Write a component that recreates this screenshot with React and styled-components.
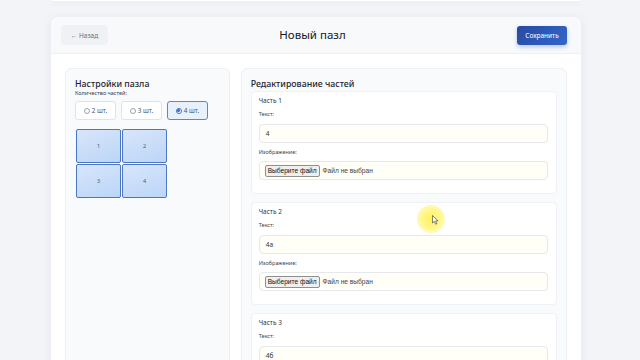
import React from "react";
import styled, { createGlobalStyle } from "styled-components";

const Global = createGlobalStyle`
  html, body { margin: 0; padding: 0; }
  body {
    background: #f2f4f8;
    font-family: "Noto Sans", "Open Sans", sans-serif;
    color: #1f2937;
    overflow: hidden;
  }
`;

const Page = styled.div`
  width: 640px;
  height: 360px;
  position: relative;
  overflow: hidden;
`;

const TopStrip = styled.div`
  margin: 0 60px 0 52px;
  height: 1px;
  background: #ffffff;
  box-shadow: 0 2px 5px rgba(30, 40, 70, 0.12);
`;

const MainCard = styled.div`
  margin: 15px 58px 0 50px;
  background: #ffffff;
  border: 1px solid #eceff4;
  border-radius: 8px;
  box-shadow: 0 2px 8px rgba(30, 40, 70, 0.06);
  height: 400px;
`;

const Header = styled.div`
  height: 36px;
  display: flex;
  align-items: center;
  justify-content: space-between;
  padding: 0 14px 0 10px;
  background: #f8f9fb;
  border-bottom: 1px solid #edf0f4;
  border-radius: 8px 8px 0 0;
`;

const BackButton = styled.button`
  width: 47px;
  height: 20px;
  border: none;
  border-radius: 4px;
  background: #eff1f5;
  color: #6b7280;
  font-family: "Noto Sans", sans-serif;
  font-size: 6.5px;
  padding: 0;
`;

const Title = styled.h1`
  margin: 0;
  font-size: 11.5px;
  line-height: 14px;
  font-weight: 400;
  color: #15181d;
`;

const SaveButton = styled.button`
  width: 50px;
  height: 19px;
  border: none;
  border-radius: 3px;
  background: linear-gradient(135deg, #274aa0 0%, #3466cc 100%);
  color: #ffffff;
  font-family: "Noto Sans", sans-serif;
  font-size: 6.5px;
  padding: 0;
  box-shadow: 0 2px 4px rgba(40, 80, 180, 0.3);
`;

const Body = styled.div`
  display: flex;
  gap: 11px;
  padding: 14px 14px 0 14px;
  align-items: flex-start;
`;

const Panel = styled.div`
  width: ${(p) => p.$w}px;
  height: 320px;
  box-sizing: border-box;
  background: #f8fafc;
  border: 1px solid #edf0f4;
  border-radius: 6px;
  padding: 9px 9px 0 9px;
`;

const PanelTitle = styled.h2`
  margin: 0;
  font-size: 8.8px;
  line-height: 12px;
  font-weight: 500;
  color: #1f2430;
`;

const SmallLabel = styled.div`
  font-size: 5.5px;
  line-height: 7px;
  color: #374151;
`;

const RadioRow = styled.div`
  display: flex;
  gap: 5px;
  margin-top: 4px;
`;

const RadioBox = styled.label`
  width: 41px;
  height: 19px;
  box-sizing: border-box;
  display: flex;
  align-items: center;
  justify-content: center;
  gap: 2px;
  border: 1px solid ${(p) => (p.$active ? "#5f86c8" : "#dfe3e9")};
  background: ${(p) => (p.$active ? "#e8f0fc" : "#ffffff")};
  border-radius: 3px;
  font-size: 6.5px;
  color: #4b5563;
`;

const RadioDot = styled.span`
  width: 4px;
  height: 4px;
  border-radius: 50%;
  border: 0.8px solid ${(p) => (p.$active ? "#3b6fd0" : "#9aa1ab")};
  background: #fff;
  display: inline-flex;
  align-items: center;
  justify-content: center;
  &::after {
    content: "";
    width: 2.4px;
    height: 2.4px;
    border-radius: 50%;
    background: ${(p) => (p.$active ? "#3b6fd0" : "transparent")};
  }
`;

const PieceGrid = styled.div`
  display: grid;
  grid-template-columns: 45px 45px;
  grid-auto-rows: 34px;
  gap: 1px;
  margin: 9px 0 0 1px;
  width: 91px;
`;

const Piece = styled.div`
  box-sizing: border-box;
  border: 1px solid #4a76c4;
  border-radius: 2px;
  background: linear-gradient(160deg, #d7e6fb 0%, #bcd5f7 100%);
  display: flex;
  align-items: center;
  justify-content: center;
  font-size: 5.5px;
  color: #4b5563;
`;

const EditTitle = styled(PanelTitle)`
  margin-bottom: 1px;
`;

const PartList = styled.div`
  display: flex;
  flex-direction: column;
  gap: 8px;
`;

const PartCard = styled.div`
  background: #ffffff;
  border: 1px solid #eef1f5;
  border-radius: 4px;
  padding: 5px 8px 14px 7px;
  height: 103px;
  box-sizing: border-box;
`;

const PartTitle = styled.div`
  font-size: 6.5px;
  line-height: 8px;
  color: #333;
`;

const FieldLabel = styled.div`
  font-size: 5.5px;
  line-height: 7px;
  color: #444;
  margin-top: ${(p) => p.$mt}px;
`;

const TextInput = styled.div`
  margin-top: 6px;
  height: 19px;
  box-sizing: border-box;
  border: 1px solid #e6e8ec;
  border-radius: 4px;
  background: #fffef7;
  display: flex;
  align-items: center;
  padding-left: 6px;
  font-size: 6.5px;
  color: #333;
`;

const FileInput = styled(TextInput)`
  margin-top: 5px;
  padding-left: 5px;
  gap: 3px;
  font-family: "Liberation Sans", Arial, sans-serif;
  font-size: 6.6px;
  color: #444;
`;

const FileButton = styled.span`
  height: 12px;
  box-sizing: border-box;
  display: inline-flex;
  align-items: center;
  padding: 0 2px;
  background: #efefef;
  border: 1px solid #8f8f8f;
  border-radius: 2px;
  color: #111;
`;

const Highlight = styled.div`
  position: absolute;
  left: 417px;
  top: 205px;
  width: 28px;
  height: 28px;
  border-radius: 50%;
  background: radial-gradient(circle, rgba(255, 240, 40, 0.8) 0%, rgba(255, 242, 70, 0.55) 55%, rgba(255, 245, 100, 0) 100%);
  pointer-events: none;
`;

const Cursor = styled.svg`
  position: absolute;
  left: 432px;
  top: 215px;
  width: 7px;
  height: 10px;
`;

const parts = [
  { n: 1, v: "4" },
  { n: 2, v: "4а" },
  { n: 3, v: "4б" },
];

export default function App() {
  return (
    <Page>
      <Global />
      <TopStrip />
      <MainCard>
        <Header>
          <BackButton>← Назад</BackButton>
          <Title>Новый пазл</Title>
          <SaveButton>Сохранить</SaveButton>
        </Header>
        <Body>
          <Panel $w={165}>
            <PanelTitle>Настройки пазла</PanelTitle>
            <SmallLabel>Количество частей:</SmallLabel>
            <RadioRow>
              {[2, 3, 4].map((n) => (
                <RadioBox key={n} $active={n === 4}>
                  <RadioDot $active={n === 4} />
                  {n} шт.
                </RadioBox>
              ))}
            </RadioRow>
            <PieceGrid>
              {[1, 2, 3, 4].map((n) => (
                <Piece key={n}>{n}</Piece>
              ))}
            </PieceGrid>
          </Panel>
          <Panel $w={327}>
            <EditTitle>Редактирование частей</EditTitle>
            <PartList>
              {parts.map((p) => (
                <PartCard key={p.n}>
                  <PartTitle>Часть {p.n}</PartTitle>
                  <FieldLabel $mt={6}>Текст:</FieldLabel>
                  <TextInput>{p.v}</TextInput>
                  <FieldLabel $mt={6}>Изображение:</FieldLabel>
                  <FileInput>
                    <FileButton>Выберите файл</FileButton>
                    Файл не выбран
                  </FileInput>
                </PartCard>
              ))}
            </PartList>
          </Panel>
        </Body>
      </MainCard>
      <Highlight />
      <Cursor viewBox="0 0 7 10">
        <path d="M0.5 0.5 L0.5 8 L2.3 6.3 L3.6 9.2 L4.8 8.7 L3.6 5.9 L6 5.9 Z" fill="#fff" stroke="#333" strokeWidth="0.6" />
      </Cursor>
    </Page>
  );
}
